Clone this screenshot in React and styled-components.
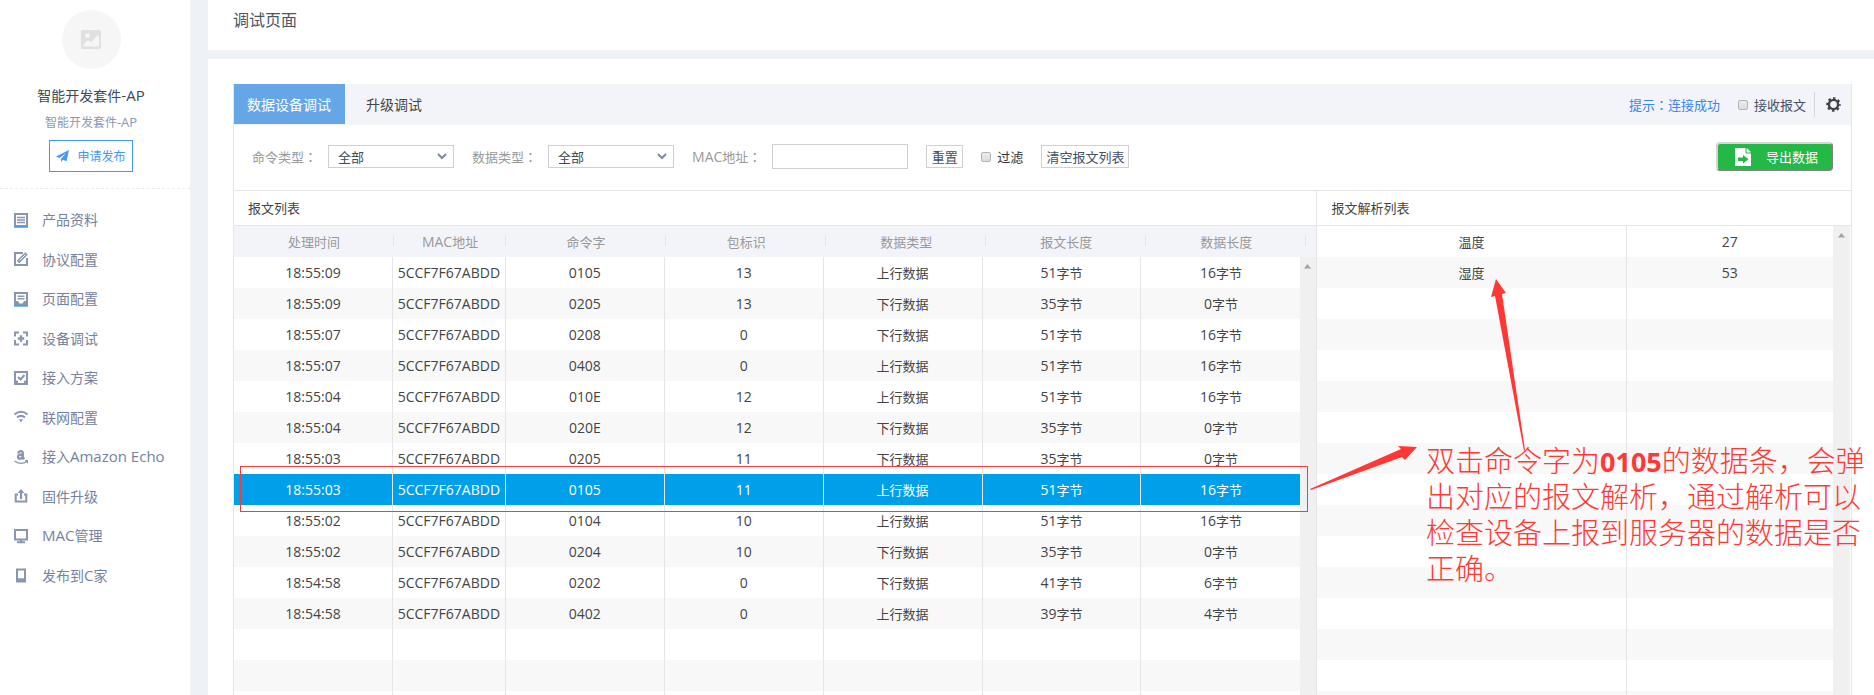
import React from "react";
import styled, { createGlobalStyle, css } from "styled-components";

const Global = createGlobalStyle`
  * { box-sizing: border-box; }
  body { margin: 0; background: #eef2f6; font-family: "Open Sans", "Noto Sans CJK SC", sans-serif; font-size: 13px; color: #444; }
  button, input, select { font: inherit; }
`;

const Page = styled.div`display: flex; gap: 18px; height: 100vh; overflow: hidden;`;

const Sidebar = styled.aside`width: 190px; flex: none; background: #fff;`;
const Profile = styled.div`
  height: 189px; padding-top: 10px; border-bottom: 1px dashed #e8ebf0;
  display: flex; flex-direction: column; align-items: center; padding-right: 8px;
`;
const Avatar = styled.div`
  width: 59px; height: 59px; border-radius: 50%; background: #f6f6f6;
  display: flex; align-items: center; justify-content: center;
`;
const ProductName = styled.h2`margin: 17px 0 0; font-size: 14px; line-height: 20px; font-weight: 400; color: #3c4a5e;`;
const ProductNote = styled.p`margin: 7px 0 0; font-size: 12px; line-height: 20px; color: #8a98b4;`;
const PublishButton = styled.button`
  margin-top: 7px; width: 84px; height: 32px; padding: 0; border: 1px solid #3f97ff; background: #fff;
  color: #3f97ff; font-size: 12px; display: flex; align-items: center; justify-content: center; gap: 8px;
`;
const Menu = styled.nav`padding: 11px 14px; display: flex; flex-direction: column;`;
const MenuLink = styled.a`
  height: 40px; display: flex; align-items: center; gap: 14px; font-size: 14px; line-height: 20px;
  color: #74829e; text-decoration: none; white-space: nowrap;
  &:nth-child(even) { height: 39px; }
  svg { flex: none; }
`;

/* Latin letters and digits are set one pixel larger than the Chinese around them */
const Latin = styled.span`font-size: calc(1em + 1px); line-height: 1;`;
const Colon = styled.span`font-family: "Noto Sans CJK TC", sans-serif;`;

const Main = styled.main`flex: 1; min-width: 0; display: flex; flex-direction: column; gap: 9px;`;
const TopBar = styled.header`height: 50px; flex: none; background: #fff; padding: 8px 25px;`;
const Title = styled.h1`margin: 0; font-size: 16px; line-height: 24px; font-weight: 400; color: #4a5566;`;
const Content = styled.section`flex: 1; min-height: 0; background: #fff; padding: 25px 22px 0 25px; display: flex;`;
const Panel = styled.div`
  flex: 1; min-width: 0; border: solid #e5e5e5; border-width: 0 1px; display: flex; flex-direction: column; position: relative;
`;

const TabBar = styled.div`height: 41px; flex: none; background: #f3f4f9; display: flex; align-items: flex-start;`;
const Tab = styled.button`
  height: 40px; padding: ${(p) => (p.$active ? "0 14px 0 13px" : "0 21px")}; border: 0; font-size: 14px;
  background: ${(p) => (p.$active ? "#65a6e7" : "transparent")}; color: ${(p) => (p.$active ? "#fff" : "#444")};
`;
const TabTools = styled.div`margin-left: auto; padding-right: 10px; height: 41px; display: flex; align-items: center;`;
const Hint = styled.span`color: #3c82f8; margin-right: 18px;`;
const CheckLabel = styled.label`display: flex; align-items: center; gap: 6px; color: ${(p) => p.$color};`;
const Check = styled.input`
  appearance: none; margin: 0; width: 10px; height: 10px; border: 1px solid #b4b4b4; border-radius: 2px;
  background: linear-gradient(#ececec, #dcdcdc);
`;
const Divider = styled.i`width: 1px; height: 25px; background: #d4d6da; margin: 0 11px 0 8px;`;
const IconButton = styled.button`border: 0; padding: 0; background: none; display: flex;`;

const Filters = styled.form`
  height: 66px; flex: none; padding: 0 18px 2px; border-bottom: 1px solid #e5e5e5; display: flex; align-items: center;
`;
const Field = styled.div`display: flex; align-items: center; gap: 11px; margin-right: 18px;`;
const FieldLabel = styled.label`color: #999; white-space: nowrap; line-height: 20px;`;
const SelectWrap = styled.span`position: relative; display: flex;
  svg { position: absolute; right: 7px; top: 8px; pointer-events: none; }
`;
const Select = styled.select`
  appearance: none; width: 126px; height: 23px; padding: 0 9px; border: 1px solid #d0d0d0; border-radius: 0; background: #fff; color: #3c4a5a;
`;
const TextInput = styled.input`width: 136px; height: 25px; border: 1px solid #d0d0d0; padding: 0 6px;`;
const PlainButton = styled.button`
  height: 23px; padding: 0 4px; min-width: 37px; border: 1px solid #d0d0d0; background: #fff; color: #445065;
  margin-right: 18px; line-height: 20px; white-space: nowrap;
`;
const FilterCheck = styled.div`margin-right: 18px;`;
const ExportButton = styled.button`
  margin-left: auto; width: 117px; height: 29px; padding: 0 13px 0 17px; border: 2px outset #d5d5d5; border-radius: 4px;
  background: #24b846; color: #fff; display: flex; align-items: center; justify-content: space-between; white-space: nowrap;
`;

const Lists = styled.div`flex: 1; min-height: 0; display: flex;`;
const List = styled.section`
  min-width: 0; overflow: hidden;
  ${(p) => p.$main ? css`width: 67%; border-right: 1px solid #e5e5e5;` : css`flex: 1;`}
`;
const ListTitle = styled.h3`margin: 0; height: 35px; padding: 0 14px; line-height: 34px; font-size: 13px; font-weight: 400; border-bottom: 1px solid #e5e5e5;`;
const TableArea = styled.div`position: relative; height: 100%;`;
const Table = styled.table`display: block; text-align: center; border-spacing: 0;`;
const section = css`display: table; table-layout: fixed; border-collapse: separate; border-spacing: 0;`;
const Head = styled.thead`${section} width: 100%; background: #f3f4f9;`;
const HeadCell = styled.th`
  height: 31px; padding: 0; font-weight: 400; color: #999; width: ${(p) => p.$width || "auto"};
  background: linear-gradient(#e2e4e8, #e2e4e8) right 10px / 1px 10px no-repeat;
  &:last-child { background: none; }
`;
const Body = styled.tbody`${section} width: calc(100% - ${(p) => p.$track}px);`;
const Row = styled.tr`
  background: ${(p) => (p.$selected ? "#009fe9" : "#fff")}; color: ${(p) => (p.$selected ? "#fff" : "#444")};
  &:nth-child(even) { background: ${(p) => (p.$selected ? "#009fe9" : "#f8f8f8")}; }
`;
const Cell = styled.td`
  height: 31px; padding: 0; white-space: nowrap; border-right: 1px solid #e5e5e5; width: ${(p) => p.$width || "auto"};
  &:last-child { border-right: 0; }
`;
const Track = styled.div`
  position: absolute; right: ${(p) => (p.$inset ? 1 : 0)}px; top: ${(p) => p.$top}px; bottom: 0; width: ${(p) => (p.$inset ? 17 : 16)}px; background: #f0f0f0;
  display: flex; justify-content: center; padding-top: 7px;
`;

const Mark = styled.div`position: absolute; left: 6px; right: 543px; top: 382px; height: 46px; border: 1px solid #f93a37;`;
const Arrows = styled.svg`position: absolute; right: 0; top: 0; pointer-events: none;`;
const Note = styled.p`
  position: absolute; margin: 0; top: 359px; right: -22px; width: 447px; color: #ff3835; font-size: 29px; line-height: 36px; font-weight: 300;
  b { font-weight: 700; font-size: 27px; line-height: 1; }
`;

const P = { fill: "none", stroke: "#8996b0", strokeWidth: 2 };
const Svg = ({ children }) => <svg width="14" height="15" viewBox="0 0 14 15" {...P}>{children}</svg>;
const icons = {
  doc: <Svg><path d="M1 1h12v12H1z" /><path d="M3 4.500h8M3 7h8M3 9.500h8" strokeWidth="1.400" /><path d="M0 14h14" stroke="#3f97ff" strokeWidth="1.500" /></Svg>,
  edit: <Svg><path d="M9 1H1v12h12V6" /><path d="M4 10L12.500 1.500" strokeWidth="3.600" /><path d="M5.500 8.500L11.500 2.500" stroke="#fff" strokeWidth=".9" /></Svg>,
  page: <Svg><path d="M1 1h12v12H1z" /><path d="M3.500 4.200h7M3.500 6.700h7" strokeWidth="1.400" /><path d="M1 9h3l1.500 2.500h3L10 9h3v4H1z" fill="#8996b0" stroke="none" /><path d="M0 14h14" stroke="#3f97ff" strokeWidth="1.300" /></Svg>,
  debug: <Svg><path d="M1 5.500V1.500h4M9 1.500h4V5.500M13 9v4.500H9M5 13.500H1V9" /><path d="M7 4.300v6.400M3.800 7.500h6.400" strokeWidth="2.400" /></Svg>,
  plan: <Svg><path d="M1 1h12v12H1z" /><path d="M4 6l2.500 2.500L10.500 4" /><path d="M1 9l3 1v3H1zM13 9l-3 1v3h3z" fill="#8996b0" stroke="none" /></Svg>,
  wifi: <Svg><path d="M.5 4.500Q7-1 13.500 4.500M3 7.500Q7 4.300 11 7.500" /><path d="M4.800 9.300h4.400L7 12.500z" fill="#8996b0" stroke="none" /></Svg>,
  amazon: <Svg><path d="M4 3.500C4.800.3 9 .5 8.800 3v4.300l1.400 1.900M8.800 4.500C5.500 4.500 3.800 5.200 4 7.300c.4 2.300 4.300 1.700 4.800-1" strokeWidth="2.300" /><path d="M.5 11Q7 15.500 13 11.500M11 10.700h2.500v2.500" strokeWidth="1.200" /></Svg>,
  upgrade: <Svg><path d="M4 5.500H1.700V12.500h10.600V5.500H10" /><path d="M7 10V3" strokeWidth="2.200" /><path d="M3.500 4L7 0l3.500 4z" fill="#8996b0" stroke="none" /></Svg>,
  mac: <Svg><path d="M1 1h12v9.500H1z" /><path d="M7 10v3M3 13.200h8" /></Svg>,
  phone: <Svg><path d="M3 1.500h8v10H3z" /><path d="M2 10.500h10v4H2z" fill="#8996b0" stroke="none" /></Svg>,
};

const menu = [
  ["doc", "产品资料"], ["edit", "协议配置"], ["page", "页面配置"], ["debug", "设备调试"], ["plan", "接入方案"],
  ["wifi", "联网配置"], ["amazon", "接入Amazon Echo"], ["upgrade", "固件升级"], ["mac", "MAC管理"], ["phone", "发布到C家"],
];

const columns = [["处理时间"], ["MAC地址", "112px"], ["命令字"], ["包标识"], ["数据类型"], ["报文长度"], ["数据长度"], ["", "10px"]];
const mac = "5CCF7F67ABDD";
const messages = [
  ["18:55:09", mac, "0105", "13", "上行数据", "51字节", "16字节"],
  ["18:55:09", mac, "0205", "13", "下行数据", "35字节", "0字节"],
  ["18:55:07", mac, "0208", "0", "下行数据", "51字节", "16字节"],
  ["18:55:07", mac, "0408", "0", "上行数据", "51字节", "16字节"],
  ["18:55:04", mac, "010E", "12", "上行数据", "51字节", "16字节"],
  ["18:55:04", mac, "020E", "12", "下行数据", "35字节", "0字节"],
  ["18:55:03", mac, "0205", "11", "下行数据", "35字节", "0字节"],
  ["18:55:03", mac, "0105", "11", "上行数据", "51字节", "16字节"],
  ["18:55:02", mac, "0104", "10", "上行数据", "51字节", "16字节"],
  ["18:55:02", mac, "0204", "10", "下行数据", "35字节", "0字节"],
  ["18:54:58", mac, "0202", "0", "下行数据", "41字节", "6字节"],
  ["18:54:58", mac, "0402", "0", "上行数据", "39字节", "4字节"],
];
const parsed = [["温度", "27"], ["湿度", "53"]];
const pad = (rows, total, n) => [...rows, ...Array.from({ length: total - rows.length }, () => Array(n).fill(""))];

/* Splits a text so that Latin runs and the full-width colon get their own type */
function Text({ children }) {
  const parts = children.split(/([\x20-\x7e]+|：)/).filter(Boolean);
  return (
    <span>
      {parts.map((part, i) => {
        if (part === "：") return <Colon key={i}>{part}</Colon>;
        return /^[\x20-\x7e]/.test(part) ? <Latin key={i}>{part}</Latin> : part;
      })}
    </span>
  );
}

const UpArrow = () => <svg width="8" height="5"><path d="M0 4.500L3.500 0 7 4.500z" fill="#a3a3a3" /></svg>;
const Chevron = () => <svg width="10" height="7" fill="none" stroke="#7c8a99" strokeWidth="2"><path d="M1 1l4 4 4-4" /></svg>;

function FilterSelect({ id, label }) {
  return (
    <Field>
      <FieldLabel htmlFor={id}><Text>{label}</Text></FieldLabel>
      <SelectWrap><Select id={id}><option>全部</option></Select><Chevron /></SelectWrap>
    </Field>
  );
}

export default function App() {
  return (
    <Page>
      <Global />
      <Sidebar>
        <Profile>
          <Avatar>
            <svg width="20" height="19" viewBox="0 0 20 19"><rect width="20" height="19" rx="2" fill="#e0e0e0" /><circle cx="6.500" cy="5.500" r="2.300" fill="#f6f6f6" /><path d="M2 16.500V15l5-5 3 2.500 6.500-7.500 1.500 1.500v10z" fill="#f6f6f6" /></svg>
          </Avatar>
          <ProductName><Text>智能开发套件-AP</Text></ProductName>
          <ProductNote><Text>智能开发套件-AP</Text></ProductNote>
          <PublishButton>
            <svg width="13" height="12" viewBox="0 0 13 12"><path d="M13 0L0 6.500l3.500 1.500L10 3 5 9v3l2-2.200 3.500 1.400z" fill="#3f97ff" /></svg>
            申请发布
          </PublishButton>
        </Profile>
        <Menu>
          {menu.map(([icon, text]) => <MenuLink href="#" key={text}>{icons[icon]}<Text>{text}</Text></MenuLink>)}
        </Menu>
      </Sidebar>
      <Main>
        <TopBar><Title>调试页面</Title></TopBar>
        <Content>
          <Panel>
            <TabBar>
              <Tab $active>数据设备调试</Tab>
              <Tab>升级调试</Tab>
              <TabTools>
                <Hint><Text>提示：连接成功</Text></Hint>
                <CheckLabel $color="#445065"><Check type="checkbox" />接收报文</CheckLabel>
                <Divider />
                <IconButton aria-label="设置">
                  <svg width="15" height="15" viewBox="0 0 15 15" fill="none" stroke="#444"><circle cx="7.500" cy="7.500" r="4.600" strokeWidth="2.400" /><circle cx="7.500" cy="7.500" r="6.300" strokeWidth="2" strokeDasharray="2.500 2.450" strokeDashoffset="1.250" /></svg>
                </IconButton>
              </TabTools>
            </TabBar>
            <Filters onSubmit={(e) => e.preventDefault()}>
              <FilterSelect id="command" label="命令类型：" />
              <FilterSelect id="data" label="数据类型：" />
              <Field><FieldLabel htmlFor="mac"><Text>MAC地址：</Text></FieldLabel><TextInput id="mac" /></Field>
              <PlainButton type="button">重置</PlainButton>
              <FilterCheck><CheckLabel $color="#333"><Check type="checkbox" />过滤</CheckLabel></FilterCheck>
              <PlainButton type="button">清空报文列表</PlainButton>
              <ExportButton type="button">
                <svg width="16" height="18" viewBox="0 0 16 18"><path d="M0 0h11l5 5v13H0z" fill="#fff" /><path d="M12 0l4 4h-4z" fill="#fff" opacity=".8" /><path d="M11 0v5h5" fill="none" stroke="#24b846" /><path d="M3 9.500h5V7l5.500 4.300L8 15.500V13H3z" fill="#24b846" /></svg>
                导出数据
              </ExportButton>
            </Filters>
            <Lists>
              <List $main>
                <ListTitle>报文列表</ListTitle>
                <TableArea>
                  <Table>
                    <Head><tr>{columns.map(([name, width], i) => <HeadCell key={i} $width={width}><Text>{name}</Text></HeadCell>)}</tr></Head>
                    <Body $track={16}>
                      {pad(messages, 16, 7).map((row, r) => (
                        <Row key={r} $selected={r === 7}>{row.map((v, i) => <Cell key={i} $width={i === 1 && "113px"}><Text>{v}</Text></Cell>)}</Row>
                      ))}
                    </Body>
                  </Table>
                  <Track $top={31}><UpArrow /></Track>
                </TableArea>
              </List>
              <List>
                <ListTitle>报文解析列表</ListTitle>
                <TableArea>
                  <Table>
                    <Body $track={18}>
                      {pad(parsed, 17, 2).map((row, r) => (
                        <Row key={r}>{row.map((v, i) => <Cell key={i} $width={i === 0 ? "60%" : "40%"}><Text>{v}</Text></Cell>)}</Row>
                      ))}
                    </Body>
                  </Table>
                  <Track $top={0} $inset><UpArrow /></Track>
                </TableArea>
              </List>
            </Lists>
            <Mark />
            <Arrows width="551" height="420" viewBox="0 0 551 420" fill="#ff3835">
              <path d="M10 405L101 365L98 362L117 363L105 376L102 373L11 406z" />
              <path d="M224 367L195 212L191 213L196 195L206 209L202 210L225 366z" />
            </Arrows>
            <Note>双击命令字为<b>0105</b>的数据条，会弹出对应的报文解析，通过解析可以检查设备上报到服务器的数据是否正确。</Note>
          </Panel>
        </Content>
      </Main>
    </Page>
  );
}
